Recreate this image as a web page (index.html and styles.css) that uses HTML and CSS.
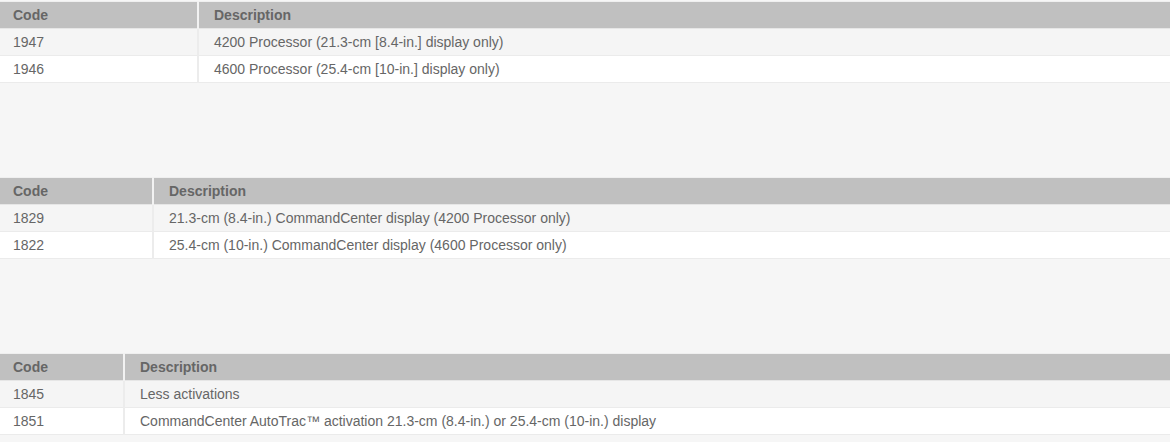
FILE: index.html
```html
<!DOCTYPE html>
<html>
<head>
<meta charset="utf-8">
<link rel="stylesheet" href="styles.css">
</head>
<body>
<div class="page">
  <table class="codes">
    <colgroup><col class="c1-a"><col></colgroup>
    <thead><tr><th>Code</th><th>Description</th></tr></thead>
    <tbody>
      <tr><td>1947</td><td>4200 Processor (21.3-cm [8.4-in.] display only)</td></tr>
      <tr><td>1946</td><td>4600 Processor (25.4-cm [10-in.] display only)</td></tr>
    </tbody>
  </table>
  <table class="codes">
    <colgroup><col class="c1-b"><col></colgroup>
    <thead><tr><th>Code</th><th>Description</th></tr></thead>
    <tbody>
      <tr><td>1829</td><td>21.3-cm (8.4-in.) CommandCenter display (4200 Processor only)</td></tr>
      <tr><td>1822</td><td>25.4-cm (10-in.) CommandCenter display (4600 Processor only)</td></tr>
    </tbody>
  </table>
  <table class="codes">
    <colgroup><col class="c1-c"><col></colgroup>
    <thead><tr><th>Code</th><th>Description</th></tr></thead>
    <tbody>
      <tr><td>1845</td><td>Less activations</td></tr>
      <tr><td>1851</td><td>CommandCenter AutoTrac™ activation 21.3-cm (8.4-in.) or 25.4-cm (10-in.) display</td></tr>
    </tbody>
  </table>
</div>
</body>
</html>
```
FILE: styles.css
```css
html, body {
  margin: 0;
  padding: 0;
  background: #f6f6f6;
}
.page {
  display: flex;
  flex-direction: column;
  gap: 94px;
  padding-top: 1px;
  font-family: "Liberation Sans", Arial, sans-serif;
  font-size: 14px;
  color: #666;
}
.codes {
  width: 100%;
  border-collapse: collapse;
  table-layout: fixed;
  border-top: 1px solid #efefef;
}
.c1-a { width: 198px; }
.c1-b { width: 153px; }
.c1-c { width: 124px; }
.codes th, .codes td {
  height: 27px;
  padding: 0 0 0 15px;
  box-sizing: border-box;
  text-align: left;
  vertical-align: middle;
  border-bottom: 1px solid #ebebeb;
  border-left: 2px solid #ececec;
}
.codes th:first-child, .codes td:first-child {
  border-left: none;
  padding-left: 13px;
}
.codes th {
  background: #c0c0c0;
  font-weight: bold;
  color: #666;
  border-left-color: #f2f2f2;
  border-bottom-color: #e6e6e6;
}
.codes tbody tr:nth-child(odd) td { background: #f5f5f5; }
.codes tbody tr:nth-child(even) td { background: #ffffff; }
```
